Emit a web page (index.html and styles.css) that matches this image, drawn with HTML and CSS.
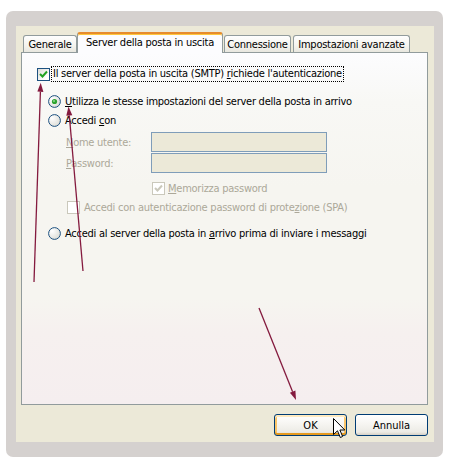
FILE: index.html
```html
<!DOCTYPE html>
<html lang="it">
<head>
<meta charset="utf-8">
<title>Server della posta in uscita</title>
<link rel="stylesheet" href="styles.css">
</head>
<body>
<div class="frame">
  <div class="dialog">
    <div class="tabs">
      <div class="tab t-gen">Generale</div>
      <div class="tab active t-srv">Server della posta in uscita</div>
      <div class="tab t-con">Connessione</div>
      <div class="tab t-imp">Impostazioni avanzate</div>
    </div>
    <div class="panel">
      <div class="row r-auth">
        <span class="cb"><svg width="11" height="11" viewBox="0 0 11 11"><polyline points="2,5 4.5,7.5 9,2.5" fill="none" stroke="#21a121" stroke-width="2"/></svg></span>
        <span class="lbl focus">Il server della posta in uscita (SMTP) <u>r</u>ichiede l'autenticazione</span>
      </div>
      <div class="row r-radio1">
        <svg class="rb" width="13" height="13" viewBox="0 0 13 13"><defs><radialGradient id="rg1" cx="0.3" cy="0.3" r="0.8"><stop offset="0" stop-color="#ffffff"/><stop offset="1" stop-color="#dcdcd5"/></radialGradient></defs><circle cx="6.5" cy="6.5" r="5.9" fill="url(#rg1)" stroke="#1c5180" stroke-width="1"/><circle cx="6.5" cy="6.5" r="2.6" fill="#2ea32e"/><circle cx="6" cy="6" r="1" fill="#8ed88e"/></svg>
        <span class="lbl"><u>U</u>tilizza le stesse impostazioni del server della posta in arrivo</span>
      </div>
      <div class="row r-radio2">
        <svg class="rb" width="13" height="13" viewBox="0 0 13 13"><circle cx="6.5" cy="6.5" r="5.9" fill="url(#rg1)" stroke="#1c5180" stroke-width="1"/></svg>
        <span class="lbl">Accedi <u>c</u>on</span>
      </div>
      <div class="row field f1">
        <span class="flabel"><u>N</u>ome utente:</span>
        <span class="input"></span>
      </div>
      <div class="row field f2">
        <span class="flabel"><u>P</u>assword:</span>
        <span class="input"></span>
      </div>
      <div class="row r-mem">
        <span class="cb disabled"><svg width="11" height="11" viewBox="0 0 11 11"><polyline points="2,5 4.5,7.5 9,2.5" fill="none" stroke="#cac8bb" stroke-width="2"/></svg></span>
        <span class="lbl dis"><u>M</u>emorizza password</span>
      </div>
      <div class="row r-spa">
        <span class="cb disabled"></span>
        <span class="lbl dis">Accedi con autenticazione password di prote<u>z</u>ione (SPA)</span>
      </div>
      <div class="row r-radio3">
        <svg class="rb" width="13" height="13" viewBox="0 0 13 13"><circle cx="6.5" cy="6.5" r="5.9" fill="url(#rg1)" stroke="#1c5180" stroke-width="1"/></svg>
        <span class="lbl">Accedi al server della posta in <u>a</u>rrivo prima di inviare i messaggi</span>
      </div>
    </div>
    <div class="buttons">
      <button class="btn default">OK</button>
      <button class="btn">Annulla</button>
    </div>
  </div>
</div>

<svg class="annot" width="449" height="469" viewBox="0 0 449 469">
  <g stroke="#841a3e" stroke-width="1.3" fill="none">
    <line x1="34" y1="282" x2="40.4" y2="91.7"/>
    <line x1="83" y1="271" x2="69.3" y2="115.5"/>
    <line x1="259" y1="308" x2="292.6" y2="391.7"/>
  </g>
  <g fill="#841a3e">
    <polygon points="40.7,82.7 37.4,91.6 43.4,92"/>
    <polygon points="68.5,106.5 66.3,115.8 72.3,115.2"/>
    <polygon points="296,400 289.9,392.8 295.4,390.6"/>
  </g>
</svg>

<svg class="cursor" width="13" height="21" viewBox="0 0 13 21">
  <path d="M0.5 0.5 L0.5 16.5 L4.5 12.8 L7.3 19.5 L9.6 18.5 L6.9 12 L11.8 12 Z" fill="#fff" stroke="#000" stroke-width="1" stroke-linejoin="miter"/>
</svg>
</body>
</html>
```

FILE: styles.css
```css
html, body {
  margin: 0;
  background: #ffffff;
}
body {
  position: relative;
  width: 449px;
  height: 469px;
  overflow: hidden;
  font-family: "DejaVu Sans Condensed", "DejaVu Sans", sans-serif;
  font-stretch: condensed;
  font-size: 11px;
  letter-spacing: -0.25px;
  color: #000;
}
.frame {
  margin: 11px 0 0 6px;
  width: 437px;
  box-sizing: border-box;
  padding: 15px 9px 15px 10px;
  background: #d5d1cf;
  border-radius: 7px;
}
.dialog {
  background: #ece9d8;
  padding: 6px 6px 6px 5px;
}
.tabs {
  display: flex;
  align-items: flex-end;
  height: 20px;
  padding-left: 2px;
}
.tab {
  box-sizing: border-box;
  height: 17px;
  border: 1px solid #919b9c;
  border-bottom: none;
  border-radius: 3px 3px 0 0;
  background: linear-gradient(#fefefe, #f4f3ee 60%, #e8e7df);
  display: flex;
  align-items: center;
  justify-content: center;
  white-space: nowrap;
  padding-top: 1px;
}
.tab.active {
  height: 21px;
  margin-bottom: -1px;
  position: relative;
  z-index: 1;
  background: #fcfcfe;
  border-top: 2px solid #e68b2c;
  box-shadow: inset 0 1px 0 #ffc73c;
  padding-top: 0;
  padding-bottom: 2px;
}
.t-gen { width: 54px; }
.t-srv { width: 146px; }
.t-con { width: 67px; margin-left: 1px; }
.t-imp { width: 117px; margin-left: 2px; }

.panel {
  box-sizing: border-box;
  height: 353px;
  border: 1px solid #919b9c;
  background: linear-gradient(180deg, #fcfcfe 0%, #f8f8f5 14%, #f6f5f0 38%, #f6f5f0 70%, #f6f0ef 80%, #f5eeef 100%);
}
.row {
  display: flex;
  align-items: center;
  white-space: nowrap;
}
.cb {
  box-sizing: border-box;
  width: 13px;
  height: 13px;
  border: 1px solid #1c5180;
  background: linear-gradient(135deg, #dcdcd7, #ffffff 80%);
  display: flex;
  flex: none;
}
.cb.disabled {
  border-color: #cac8bb;
  background: #ffffff;
}
.rb { flex: none; display: block; }
.lbl u, .flabel u { text-decoration: underline; }
.dis, .flabel { color: #aca899; }

.r-auth { margin-top: 13px; height: 16px; padding-left: 15px; }
.focus {
  margin-left: 1px;
  border: 1px dotted #000;
  padding: 0 1px;
  height: 14px;
  line-height: 14px;
}
.r-radio1 { margin-top: 12px; height: 15px; padding-left: 26px; }
.r-radio2 { margin-top: 4px; height: 15px; padding-left: 26px; }
.r-radio1 .lbl, .r-radio2 .lbl, .r-radio3 .lbl { margin-left: 4px; }
.field { padding-left: 44px; height: 20px; }
.f1 { margin-top: 4px; }
.f2 { margin-top: 1px; }
.flabel { width: 85px; }
.input {
  box-sizing: border-box;
  width: 176px;
  height: 20px;
  border: 1px solid #7f9db9;
  background: #ece9d8;
}
.r-mem { margin-top: 9px; height: 13px; padding-left: 130px; }
.r-mem .lbl { margin-left: 3px; }
.r-spa { margin-top: 6px; height: 13px; padding-left: 45px; }
.r-spa .lbl { margin-left: 4px; }
.r-radio3 { margin-top: 13px; height: 13px; padding-left: 26px; }

.buttons {
  display: flex;
  justify-content: flex-end;
  gap: 8px;
  margin-top: 9px;
}
.btn {
  box-sizing: border-box;
  width: 73px;
  height: 22px;
  border: 1px solid #003c74;
  border-radius: 3px;
  background: linear-gradient(#ffffff, #f6f5f1 45%, #ecebe5 85%, #d6d0c5);
  font: inherit;
  color: #000;
  padding: 0;
  margin: 0;
}
.btn.default {
  box-shadow: inset 0 2px 0 #ffeac0, inset 0 -2px 0 #e69a1f, inset 2px 0 0 #f9c56a, inset -2px 0 0 #f9c56a;
}
.annot {
  position: absolute;
  left: 0;
  top: 0;
  pointer-events: none;
}
.cursor {
  position: absolute;
  left: 333px;
  top: 418px;
  pointer-events: none;
}
```
